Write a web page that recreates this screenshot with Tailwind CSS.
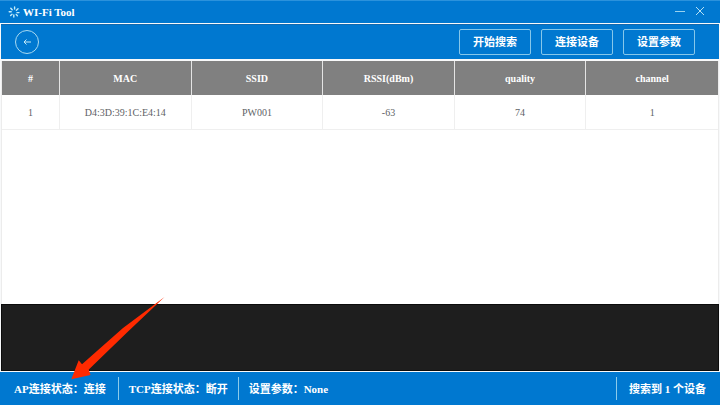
<!DOCTYPE html>
<html lang="zh-CN">
<head>
<meta charset="utf-8">
<meta name="viewport" content="width=device-width, initial-scale=1">
<title>WI-Fi Tool</title>
<script src="https://cdn.jsdelivr.net/npm/@tailwindcss/browser@4"></script>
</head>
<body class="relative flex h-screen flex-col overflow-hidden bg-[#f8f9fa] font-['Liberation_Serif','Noto_Sans_CJK_SC',serif] text-[11px] leading-4 text-white">
  <header class="flex h-[23px] shrink-0 items-center justify-between border-t border-[#2b92dc] bg-[#0078d0] pr-3.5 pl-2">
    <h1 class="flex items-center gap-[3px] font-bold">
      <svg class="size-3" viewBox="0 0 12 12" fill="none" stroke="#c4ecfa" stroke-width="1.4" stroke-linecap="round" aria-hidden="true">
        <path d="M6.600 1v2M10 2.800 8.400 4.200M11 6.600H9M9.400 9.800 8.200 8.400M5.800 11V9M2.600 9.600 4 8.200M1.200 5.800h2M2.800 2.200 4.200 3.800"/>
      </svg>
      WI-Fi Tool
    </h1>
    <div class="flex items-center gap-2">
      <button type="button" aria-label="最小化" class="block">
        <svg class="h-3 w-3" viewBox="0 0 12 12" fill="none" stroke="#9ad2ee" aria-hidden="true"><path d="M1 5.500h10"/></svg>
      </button>
      <button type="button" aria-label="关闭" class="block">
        <svg class="h-3 w-3" viewBox="0 0 12 12" fill="none" stroke="#b4e0f4" aria-hidden="true"><path d="m2 1 8 8M10 1l-8 8"/></svg>
      </button>
    </div>
  </header>

  <nav class="mx-px mt-px flex h-[35px] shrink-0 items-center justify-between border-t border-[#1268ae] bg-[#0078d0] pr-6 pl-3.5">
    <button type="button" aria-label="返回" class="flex size-6 items-center justify-center rounded-full border border-[#a9daf1]">
      <svg class="size-2" viewBox="0 0 8 8" fill="none" stroke="#c6eaf6" aria-hidden="true"><path d="M8 4H1M3.500 1.500 1 4l2.500 2.500"/></svg>
    </button>
    <div class="flex gap-2.5 font-bold">
      <button type="button" class="h-[26px] w-[72px] rounded-xs border border-[#86c7ea]">开始搜索</button>
      <button type="button" class="h-[26px] w-[72px] rounded-xs border border-[#86c7ea]">连接设备</button>
      <button type="button" class="h-[26px] w-[72px] rounded-xs border border-[#86c7ea]">设置参数</button>
    </div>
  </nav>

  <main class="mx-px mt-0.5 flex-1 border-x border-[#ececec] bg-white">
    <table class="w-full table-fixed border-separate border-spacing-0 text-center text-[10px]">
      <colgroup><col class="w-[58px]"><col><col><col><col><col></colgroup>
      <thead class="bg-[#808080]">
        <tr class="h-[34px]">
          <th class="border-r border-[#e4e4e4] pt-0.5">#</th>
          <th class="border-r border-[#e4e4e4] pt-0.5">MAC</th>
          <th class="border-r border-[#e4e4e4] pt-0.5">SSID</th>
          <th class="border-r border-[#e4e4e4] pt-0.5">RSSI(dBm)</th>
          <th class="border-r border-[#e4e4e4] pt-0.5">quality</th>
          <th class="pt-0.5">channel</th>
        </tr>
      </thead>
      <tbody class="text-[#606266]">
        <tr class="h-[35px]">
          <td class="border-r border-b border-[#efefef] pt-0.5">1</td>
          <td class="border-r border-b border-[#efefef] pt-0.5">D4:3D:39:1C:E4:14</td>
          <td class="border-r border-b border-[#efefef] pt-0.5">PW001</td>
          <td class="border-r border-b border-[#efefef] pt-0.5">-63</td>
          <td class="border-r border-b border-[#efefef] pt-0.5">74</td>
          <td class="border-b border-[#efefef] pt-0.5">1</td>
        </tr>
      </tbody>
    </table>
  </main>

  <section aria-label="日志" class="mx-px mb-px h-[67px] shrink-0 border border-[#0c0c0c] bg-[#1e1e1e]"></section>

  <footer class="flex h-[33px] shrink-0 items-center bg-[#0078d0] px-3.5 font-bold">
    <span class="flex h-[23px] items-center border-r border-[#8ccbea] pr-3">AP连接状态：连接</span>
    <span class="flex h-[23px] items-center border-r border-[#8ccbea] px-2.5">TCP连接状态：断开</span>
    <span class="px-2.5">设置参数：None</span>
    <span class="ml-auto flex h-[23px] items-center border-l border-[#8ccbea] pl-3">搜索到 1 个设备</span>
  </footer>

  <!-- Pointer to the AP connection state -->
  <svg class="pointer-events-none absolute bottom-6 left-[70px] h-[86px] w-24" viewBox="0 0 96 86" aria-hidden="true">
    <path fill="#ff2a00" d="M94.500 2 53 33 12 69.300 8.700 65.300 1.300 84.300 20.500 80 18.800 74.600 57 37.500Z"/>
  </svg>
</body>
</html>
